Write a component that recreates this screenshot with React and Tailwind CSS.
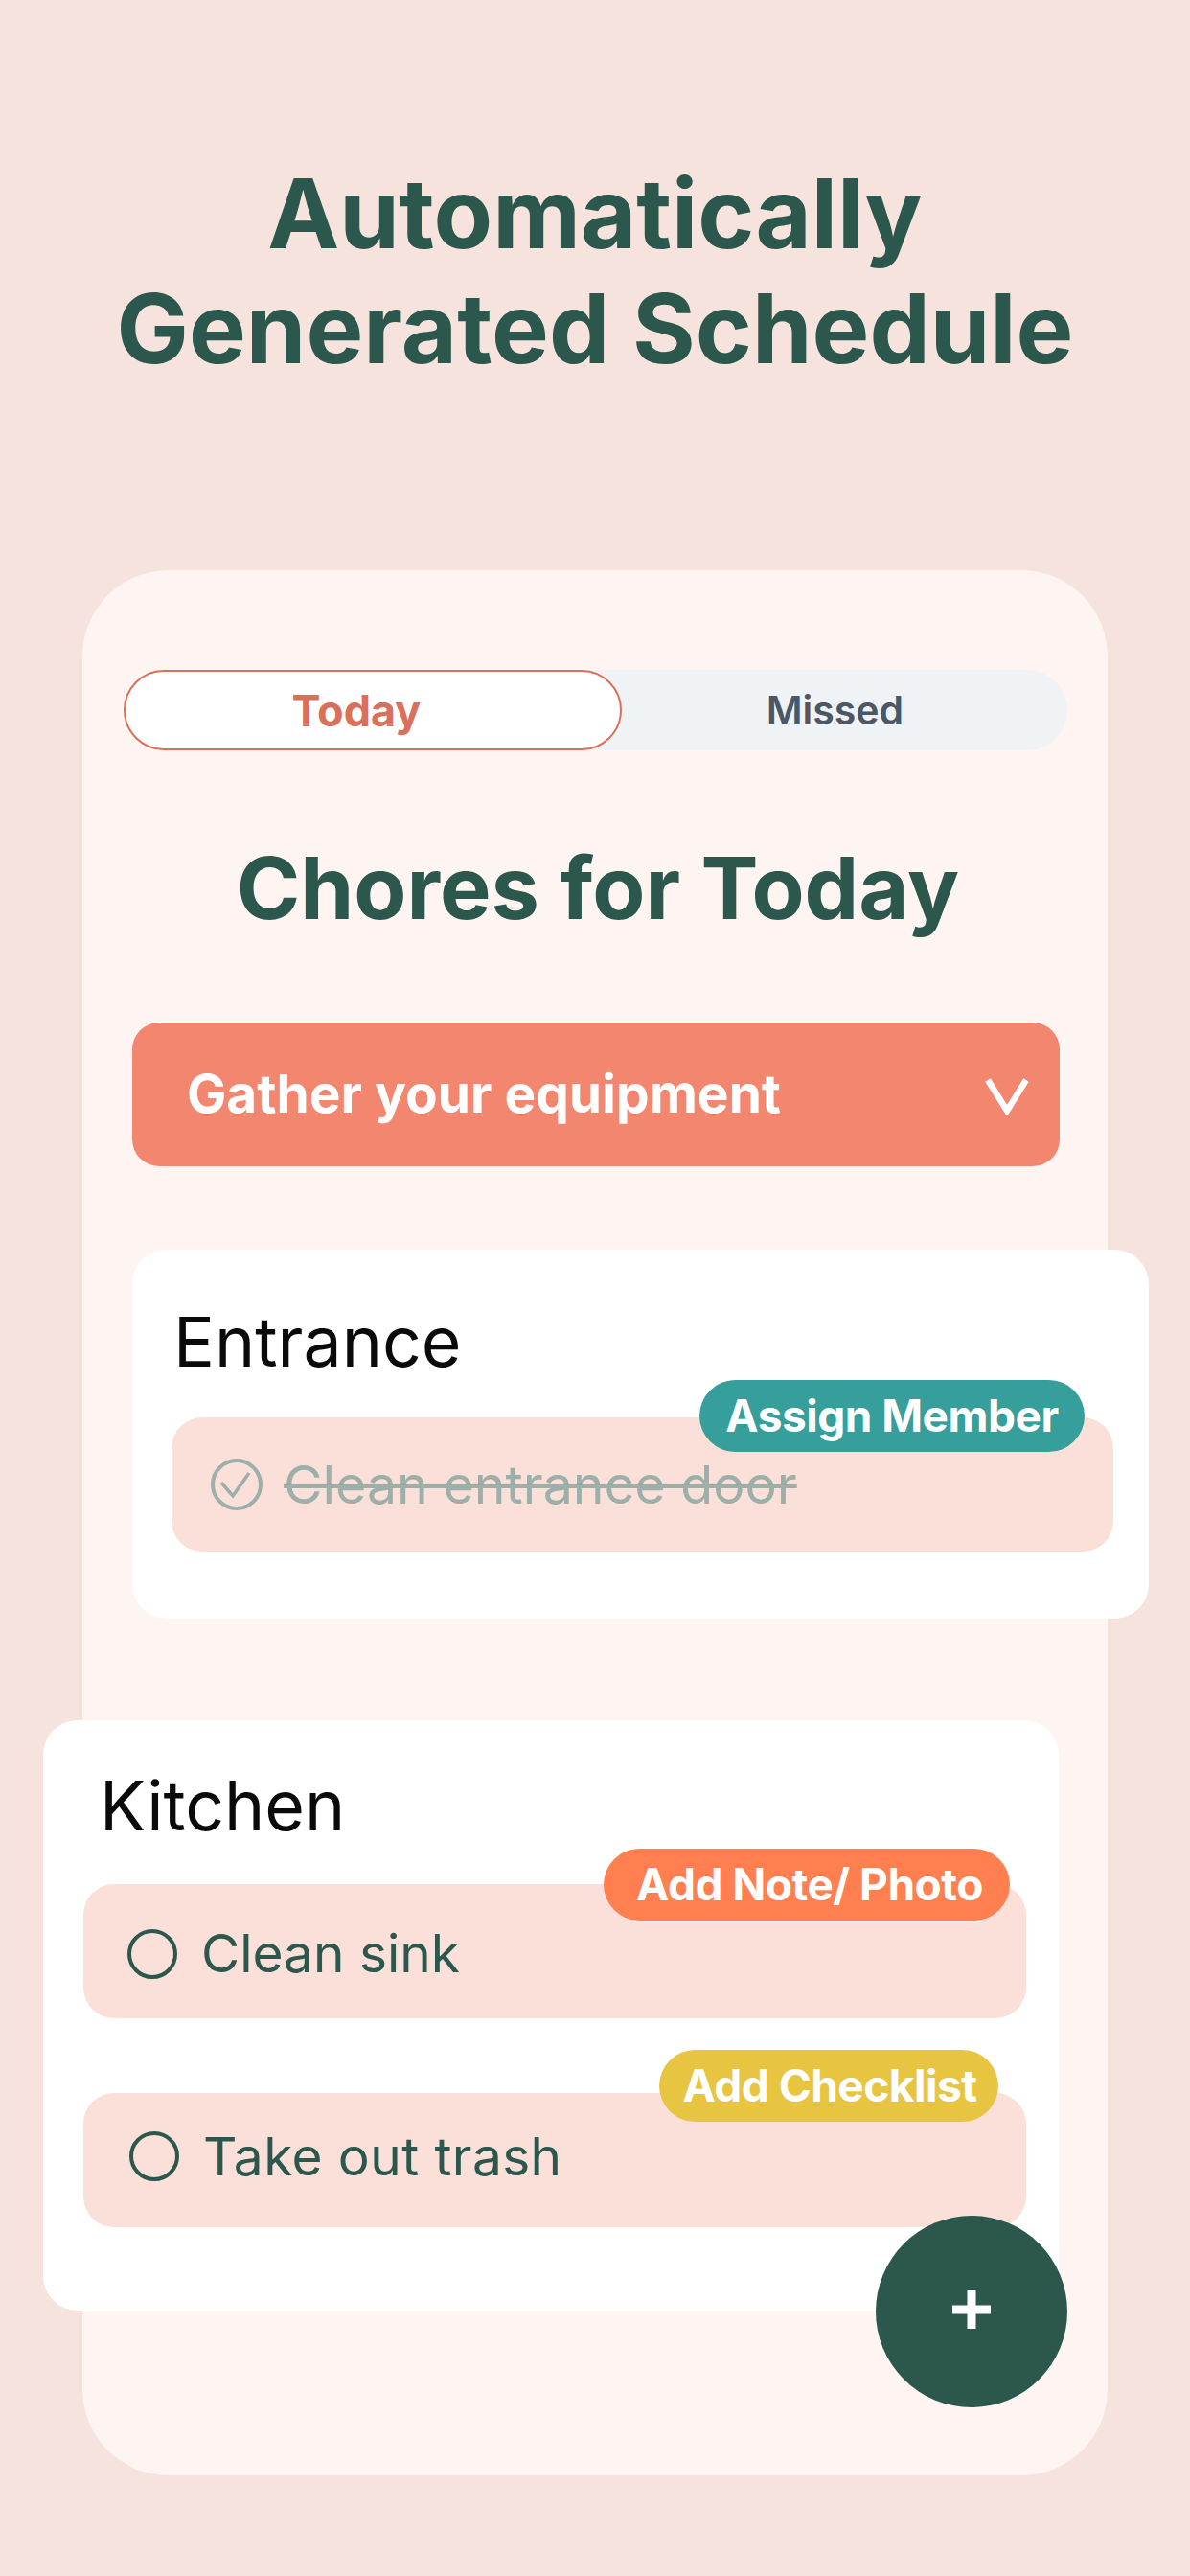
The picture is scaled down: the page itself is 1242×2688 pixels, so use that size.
const inter = "font-['Inter',sans-serif]";

function Circle() {
  return <div className="w-[52px] h-[52px] shrink-0 rounded-full border-[4px] border-[#2c574c]" />;
}

function CheckedCircle() {
  return (
    <svg className="w-[54px] h-[54px] shrink-0" viewBox="0 0 54 54" fill="none" stroke="#9cafa9" strokeWidth="4">
      <circle cx="27" cy="27" r="25" />
      <path d="M11 25l12 14 17-24" strokeWidth="3.5" />
    </svg>
  );
}

function Badge({ className, children }) {
  return (
    <div className={`absolute h-[75px] rounded-full flex items-center justify-center text-white font-bold text-[46px] tracking-[-0.5px] ${className}`}>
      {children}
    </div>
  );
}

function ChoreRow({ label, badge, className = "", textClass = "" }) {
  return (
    <div className={`relative h-[140px] bg-[#fbe0da] rounded-[32px] flex items-center gap-[25px] ${className}`}>
      <Circle />
      <span className={`text-[#2c574c] text-[55px] leading-none ${textClass}`}>{label}</span>
      {badge}
    </div>
  );
}

export default function App() {
  return (
    <div className={`${inter} w-[1242px] h-[2688px] bg-[#f6e3dd] overflow-hidden pt-[163px]`}>
      <h1 className="text-center font-bold text-[#2c574c] text-[100.5px] leading-[120px]">
        Automatically
        <br />
        Generated Schedule
      </h1>

      <div className="relative mt-[192px] mx-[86px] h-[1988px] bg-[#fef4f2] rounded-[90px] pt-[104px]">
        <div className="relative ml-[43px] mr-[42px] h-[84px] bg-[#eff3f6] rounded-full flex">
          <div className="w-[520px] h-[84px] bg-white border-2 border-[#d9705c] rounded-full flex items-center justify-center pr-[34px] pt-[2px] text-[#d9705c] font-bold text-[45px]">
            Today
          </div>
          <div className="flex-1 flex items-center justify-center pr-[20px] pt-[2px] text-[#4d5664] font-semibold text-[41px]">
            Missed
          </div>
        </div>

        <h2 className="text-center font-bold text-[#2c574c] text-[90px] leading-[100px] mt-[94px] pl-[6px]">
          Chores for Today
        </h2>

        <div className="ml-[52px] mr-[50px] mt-[90px] h-[150px] bg-[#f2866f] rounded-[28px] flex items-center justify-between pl-[57px] pr-[32px]">
          <span className="text-white font-bold text-[55px] mt-[-2px]">Gather your equipment</span>
          <svg className="w-[46px] h-[40px] mt-[4px]" viewBox="0 0 46 40" fill="none" stroke="#fff" strokeWidth="6.5">
            <path d="M3 3l20 32L43 3" />
          </svg>
        </div>

        <div className="relative ml-[52px] mr-[-43px] mt-[87px] h-[385px] bg-white rounded-[36px] pt-[55px]">
          <div className="pl-[43px] text-[#0a0a0a] text-[71.5px] leading-[82px]">Entrance</div>
          <div className="relative mt-[38px] ml-[41px] mr-[37px] h-[140px] bg-[#fbe0da] rounded-[32px] flex items-center pl-[41px] gap-[22px]">
            <CheckedCircle />
            <span className="text-[#9cafa9] text-[55.5px] leading-none line-through decoration-[4px]">Clean entrance door</span>
            <Badge className="left-[551px] top-[-39px] w-[402px] bg-[#369e9b]">Assign Member</Badge>
          </div>
        </div>

        <div className="relative ml-[-41px] mr-[51px] mt-[106px] h-[616px] bg-white rounded-[36px] pt-[48px]">
          <div className="pl-[59px] text-[#0a0a0a] text-[71.5px] leading-[82px]">Kitchen</div>
          <div className="ml-[42px] mr-[34px] mt-[41px]">
            <ChoreRow
              label="Clean sink"
              className="pl-[46px] pt-[5px]"
              badge={<Badge className="left-[543px] top-[-37px] w-[424px] pl-[6px] bg-[#ff7f50]">Add Note/ Photo</Badge>}
            />
            <ChoreRow
              label="Take out trash"
              textClass="tracking-[0.4px]"
              className="mt-[78px] pl-[48px] pb-[8px]"
              badge={<Badge className="left-[601px] top-[-45px] w-[354px] pl-[2px] bg-[#e8c541]">Add Checklist</Badge>}
            />
          </div>
        </div>

        <div className="absolute left-[828px] top-[1717px] w-[200px] h-[200px] rounded-full bg-[#2c574c] flex items-center justify-center pb-[5px]">
          <svg className="w-[40px] h-[40px]" viewBox="0 0 40 40" fill="#fff">
            <rect x="15.5" y="0" width="9" height="40" />
            <rect x="0" y="15.5" width="40" height="9" />
          </svg>
        </div>
      </div>
    </div>
  );
}
